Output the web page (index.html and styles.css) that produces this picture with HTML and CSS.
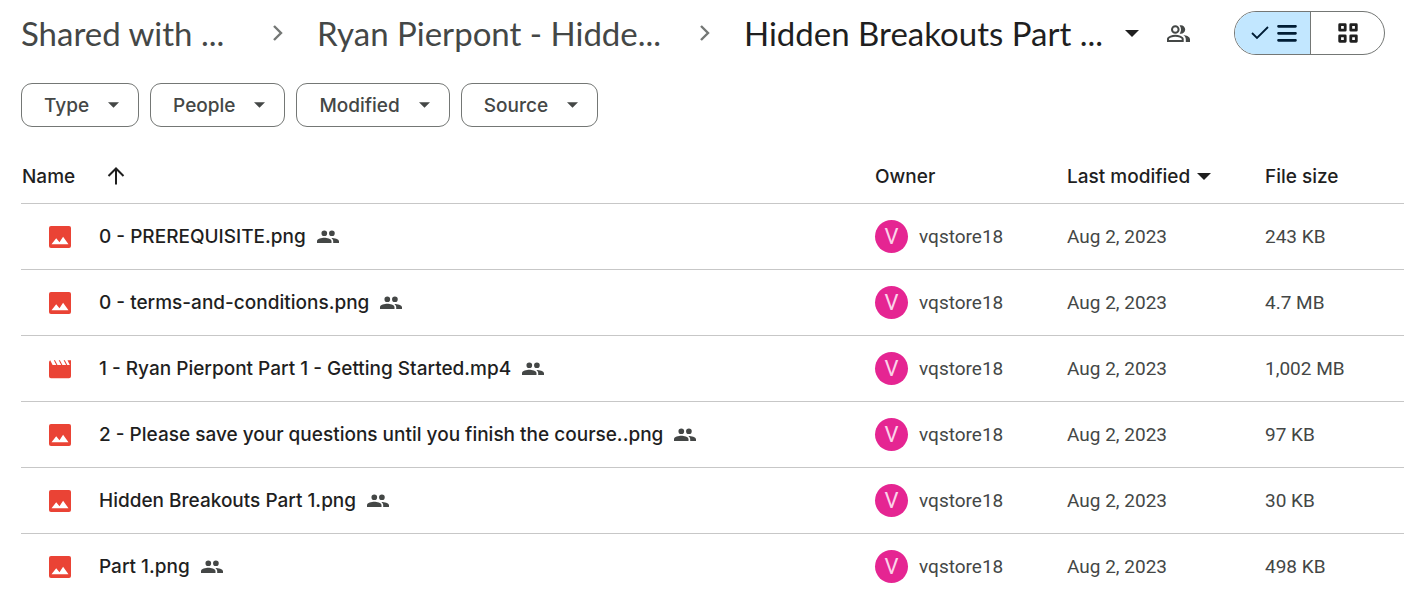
FILE: index.html
```html
<!DOCTYPE html>
<html lang="en">
<head>
<meta charset="utf-8">
<title>Hidden Breakouts Part 1</title>
<link rel="stylesheet" href="styles.css">
</head>
<body>
<svg class="sprite" aria-hidden="true">
  <symbol id="image" viewBox="0 0 22 22"><rect width="22" height="22" rx="2" fill="#ea4335"/><path d="M2.500 18.200l4.700-5.900 3.300 4 3.600-5.600 5.400 7.500z" fill="#fff"/></symbol>
  <symbol id="video" viewBox="0 0 22 22"><path d="M0 4.500Q0 3 1.200 2.300L3.600 7h3.700L4.800 2.300h1.200L8.500 7h3.700L9.700 2.300h1.200L13.400 7h3.700l-2.500-4.700h1.200L18.300 7h2.500l-2.300-4.700H22v15.900q0 2-2 2H2q-2 0-2-2z" fill="#ea4335"/></symbol>
  <symbol id="people" viewBox="0 0 22 13"><path d="M7.300 6.100a2.850 2.850 0 1 0 0-5.700 2.850 2.850 0 0 0 0 5.700zM14.900 6.100a2.850 2.850 0 1 0 0-5.700 2.850 2.850 0 0 0 0 5.700zM0 13v-1.800C0 8.700 4.800 7.800 7.300 7.800s7.200.9 7.200 3.400V13zM16.200 13v-1.800c0-1.400-.7-2.500-1.800-3.300 3 .1 7.600 1.100 7.600 3.300V13z" fill="#444746"/></symbol>
  <symbol id="chevron" viewBox="0 0 12 18"><path d="M2 2l7 7-7 7" fill="none" stroke="#747775" stroke-width="2.400"/></symbol>
  <symbol id="caret" viewBox="0 0 12 6"><path d="M0 0h12L6 6z" fill="currentColor"/></symbol>
</svg>
<main class="drive">
  <header class="topbar">
    <nav class="crumbs" aria-label="Folder path">
      <a class="crumb root" href="#">Shared with ...</a>
      <svg class="chevron"><use href="#chevron"/></svg>
      <a class="crumb parent" href="#">Ryan Pierpont - Hidde...</a>
      <svg class="chevron"><use href="#chevron"/></svg>
      <button class="crumb current" type="button">Hidden Breakouts Part ... <svg class="caret-lg"><use href="#caret"/></svg></button>
    </nav>
    <button class="share" type="button" aria-label="Manage access">
      <svg class="share-icon" viewBox="0 0 23 17"><g fill="none" stroke="#444746" stroke-width="2"><circle cx="8.300" cy="4.500" r="3.300"/><path d="M1 16v-2c0-2.200 4.600-3.200 7.300-3.200s7.400 1 7.400 3.200v2z"/></g><path d="M12.600.4c2.800-.9 5.600 1.300 5.600 4.100s-2.800 5-5.600 4.100c1.900-2.500 1.900-5.700 0-8.200zM16.300 10c3 .4 6.700 1.700 6.700 4.300V17h-4.200v-2.700c0-1.800-1-3.300-2.500-4.300z" fill="#444746"/></svg>
    </button>
    <div class="layout-toggle" role="group" aria-label="Layout">
      <button class="layout selected" type="button" aria-label="List layout" aria-pressed="true">
        <svg class="check" viewBox="0 0 18 14"><path d="M1 7l5 5L17 1" fill="none" stroke="#001d35" stroke-width="1.800"/></svg>
        <svg class="lines" viewBox="0 0 20 18"><path d="M1.500 2.300h17M1.500 9.300h17M1.500 16.300h17" stroke="#001d35" stroke-width="2.700" stroke-linecap="round"/></svg>
      </button>
      <button class="layout" type="button" aria-label="Grid layout" aria-pressed="false">
        <svg class="grid" viewBox="0 0 20 20"><g fill="none" stroke="#1f1f1f" stroke-width="2.800" stroke-linejoin="round"><path d="M1.700 1.700h5.500v5.500H1.700zM12.800 1.700h5.500v5.500h-5.500zM1.700 12.800h5.500v5.500H1.700zM12.800 12.800h5.500v5.500h-5.500z"/></g></svg>
      </button>
    </div>
  </header>

  <div class="filters">
    <button class="chip" type="button">Type <svg class="caret"><use href="#caret"/></svg></button>
    <button class="chip" type="button">People <svg class="caret"><use href="#caret"/></svg></button>
    <button class="chip" type="button">Modified <svg class="caret"><use href="#caret"/></svg></button>
    <button class="chip" type="button">Source <svg class="caret"><use href="#caret"/></svg></button>
  </div>

  <table class="files">
    <colgroup><col><col class="col-owner"><col class="col-modified"><col class="col-size"></colgroup>
    <thead>
      <tr>
        <th scope="col"><span class="head name-head">Name <svg class="arrow" viewBox="0 0 18 18"><path d="M9 17.500V2M1.500 9L9 1.500 16.500 9" fill="none" stroke="#1f1f1f" stroke-width="2"/></svg></span></th>
        <th scope="col">Owner</th>
        <th scope="col"><span class="head">Last modified <svg class="caret-lg"><use href="#caret"/></svg></span></th>
        <th scope="col">File size</th>
      </tr>
    </thead>
    <tbody>
      <tr><td><div class="file"><svg class="type"><use href="#image"/></svg><span>0 - PREREQUISITE.png</span><svg class="people"><use href="#people"/></svg></div></td><td><div class="owner"><span class="avatar">V</span>vqstore18</div></td><td>Aug 2, 2023</td><td>243 KB</td></tr>
      <tr><td><div class="file"><svg class="type"><use href="#image"/></svg><span>0 - terms-and-conditions.png</span><svg class="people"><use href="#people"/></svg></div></td><td><div class="owner"><span class="avatar">V</span>vqstore18</div></td><td>Aug 2, 2023</td><td>4.7 MB</td></tr>
      <tr><td><div class="file"><svg class="type"><use href="#video"/></svg><span>1 - Ryan Pierpont Part 1 - Getting Started.mp4</span><svg class="people"><use href="#people"/></svg></div></td><td><div class="owner"><span class="avatar">V</span>vqstore18</div></td><td>Aug 2, 2023</td><td>1,002 MB</td></tr>
      <tr><td><div class="file"><svg class="type"><use href="#image"/></svg><span>2 - Please save your questions until you finish the course..png</span><svg class="people"><use href="#people"/></svg></div></td><td><div class="owner"><span class="avatar">V</span>vqstore18</div></td><td>Aug 2, 2023</td><td>97 KB</td></tr>
      <tr><td><div class="file"><svg class="type"><use href="#image"/></svg><span>Hidden Breakouts Part 1.png</span><svg class="people"><use href="#people"/></svg></div></td><td><div class="owner"><span class="avatar">V</span>vqstore18</div></td><td>Aug 2, 2023</td><td>30 KB</td></tr>
      <tr><td><div class="file"><svg class="type"><use href="#image"/></svg><span>Part 1.png</span><svg class="people"><use href="#people"/></svg></div></td><td><div class="owner"><span class="avatar">V</span>vqstore18</div></td><td>Aug 2, 2023</td><td>498 KB</td></tr>
    </tbody>
  </table>
</main>
</body>
</html>
```
FILE: styles.css
```css
* { box-sizing: border-box; }

body {
  margin: 0;
  background: #fff;
  color: #1f1f1f;
  font-family: Roboto, Inter, sans-serif;
  font-size: 19px;
}

button {
  margin: 0;
  padding: 0;
  border: 0;
  background: none;
  color: inherit;
  font: inherit;
}

svg { display: block; flex: none; }
.sprite { position: absolute; width: 0; height: 0; }

.drive {
  height: 100vh;
  overflow: hidden;
  padding: 11px 0 0 21px;
}

.topbar {
  display: flex;
  align-items: center;
  padding-right: 19px;
}

.crumbs {
  display: flex;
  align-items: center;
  gap: 33px;
  white-space: nowrap;
}

.crumb {
  color: #444746;
  font-family: Lato, Roboto, sans-serif;
  font-size: 33px;
  line-height: 44px;
  text-decoration: none;
}

.crumb.root { min-width: 218px; }
.crumb.parent { min-width: 349px; }

.crumb.current {
  display: flex;
  align-items: center;
  gap: 22px;
  color: #1f1f1f;
}

.chevron { width: 12px; height: 18px; }
.caret { width: 11px; height: 6px; }
.caret-lg { width: 14px; height: 7px; }
.share { margin-left: 28px; }
.share-icon { width: 23px; height: 17px; }

.layout-toggle {
  display: flex;
  width: 151px;
  height: 44px;
  margin-left: auto;
  border: 1px solid #747775;
  border-radius: 22px;
  overflow: hidden;
}

.layout {
  display: flex;
  flex: 1;
  align-items: center;
  justify-content: center;
  gap: 8px;
}

.layout.selected {
  padding-left: 2px;
  background: #c2e7ff;
  border-right: 1px solid #747775;
}

.check { width: 18px; height: 14px; }
.lines { width: 20px; height: 18px; }
.grid { width: 20px; height: 20px; }

.filters {
  display: flex;
  gap: 11px;
  margin-top: 28px;
}

.chip {
  display: flex;
  align-items: center;
  gap: 19px;
  height: 44px;
  padding: 0 19px 0 22px;
  border: 1px solid #747775;
  border-radius: 11px;
  color: #444746;
  font-family: Inter, sans-serif;
  font-weight: 500;
}

.files {
  width: 100%;
  margin-top: 22px;
  border-collapse: separate;
  border-spacing: 0;
  table-layout: fixed;
}

.col-owner { width: 192px; }
.col-modified { width: 198px; }
.col-size { width: 140px; }

th, td {
  padding: 0 0 0 1px;
  border-bottom: 1px solid #c7c7c7;
  text-align: left;
  white-space: nowrap;
}

th {
  height: 55px;
  font-family: Inter, sans-serif;
  font-weight: 500;
}

td {
  height: 66px;
  color: #444746;
}

.head { display: flex; align-items: center; gap: 7px; }
.name-head { gap: 32px; }
.arrow { width: 18px; height: 18px; }

.file {
  display: flex;
  align-items: center;
  padding-left: 27px;
  color: #1f1f1f;
  font-family: Inter, sans-serif;
  font-weight: 500;
}

.type { width: 22px; height: 22px; margin-right: 28px; }
.people { width: 22px; height: 13px; margin-left: 11px; }

.owner { display: flex; align-items: center; gap: 11px; }

.avatar {
  width: 33px;
  height: 33px;
  border-radius: 50%;
  background: #e52592;
  color: #fbd3e9;
  font-size: 22px;
  line-height: 33px;
  text-align: center;
}
```
